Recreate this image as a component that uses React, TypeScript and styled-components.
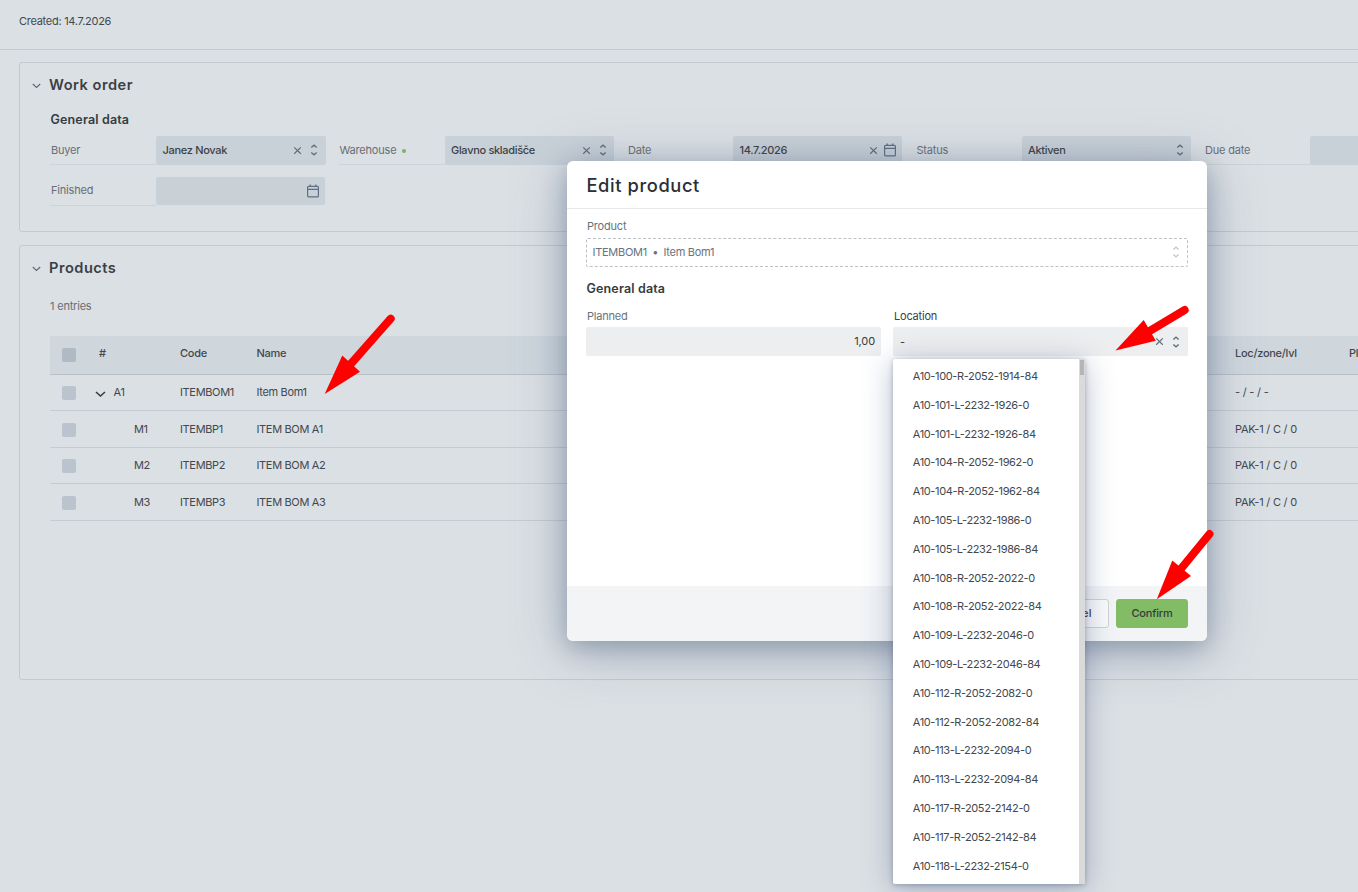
import React from "react";
import styled, { createGlobalStyle } from "styled-components";

const GlobalStyle = createGlobalStyle`
  * { box-sizing: border-box; }
  html, body { margin: 0; padding: 0; }
  body {
    width: 1358px;
    height: 892px;
    overflow: hidden;
    background: #dbe0e4;
    font-family: Inter, "Liberation Sans", sans-serif;
    font-size: 11px;
    letter-spacing: -0.27px;
    color: #43484d;
  }
`;

const Page = styled.div`
  position: relative;
  width: 1358px;
  height: 892px;
  overflow: hidden;
`;

const TopBar = styled.header`
  height: 50px;
  padding: 14px 19px 0;
  line-height: 14px;
  border-bottom: 1px solid #c3c9ce;
`;

const Sections = styled.main`
  display: flex;
  flex-direction: column;
  gap: 13px;
  padding: 12px 0 0 19px;
  width: 1600px;
`;

const Panel = styled.section<{ $height: number }>`
  height: ${(p) => p.$height}px;
  border: 1px solid #c3c9ce;
  border-radius: 3px;
  padding: 12px 0 0 30px;
`;

const PanelTitle = styled.h2`
  display: flex;
  align-items: center;
  gap: 7px;
  height: 20px;
  margin: 0 0 0 -19px;
  font-size: 14.6px;
  font-weight: 600;
  letter-spacing: 0.5px;
  color: #3a3f44;
  svg { margin: 2px 0 0; }
`;

const SubTitle = styled.h3<{ $top: number; $bottom: number }>`
  margin: ${(p) => p.$top}px 0 ${(p) => p.$bottom}px;
  padding-left: 0.5px;
  height: 16px;
  line-height: 16px;
  font-size: 12.5px;
  font-weight: 600;
  letter-spacing: 0.15px;
  color: #363b40;
`;

const Fields = styled.div`
  display: grid;
  grid-template-columns: repeat(5, 275.5px);
  column-gap: 13px;
  row-gap: 12px;
`;

const Field = styled.div`
  display: flex;
  height: 29px;
`;

const FieldLabel = styled.label<{ $raised?: boolean }>`
  display: flex;
  align-items: center;
  gap: 6px;
  width: 106px;
  padding: 0 0 ${(p) => (p.$raised ? 2 : 0)}px 1px;
  border-bottom: 1px solid #cdd3d8;
  letter-spacing: -0.2px;
  color: #686e74;
`;

const RequiredDot = styled.span`
  width: 4px;
  height: 4px;
  margin-top: 1px;
  border-radius: 50%;
  background: #7fb069;
`;

const FieldInput = styled.div<{ $date?: boolean }>`
  display: flex;
  align-items: center;
  flex: 1;
  gap: 6px;
  height: ${(p) => (p.$date ? 28 : 28.5)}px;
  margin-right: ${(p) => (p.$date ? 1 : 0)}px;
  padding: 0 5.5px 0 6.5px;
  border-radius: 2px;
  background: #c9d1d8;
  color: #3c4146;
  font-weight: 500;
  letter-spacing: -0.31px;
`;

const Value = styled.span`
  flex: 1;
`;

const Entries = styled.div`
  margin: 21px 0 23px;
  height: 14px;
  line-height: 14px;
  letter-spacing: -0.2px;
  color: #686e74;
`;

const Row = styled.div<{ $head?: boolean }>`
  display: grid;
  grid-template-columns: 49px 81px 76.5px 978.5px 114px 1fr;
  align-items: center;
  height: ${(p) => (p.$head ? "38.5px" : "36.6px")};
  border-bottom: 1px solid ${(p) => (p.$head ? "#b9c0c6" : "#c5cbd1")};
  background: ${(p) => (p.$head ? "#cfd7dd" : "transparent")};
  font-weight: ${(p) => (p.$head ? 500 : 400)};
  letter-spacing: ${(p) => (p.$head ? -0.27 : -0.34)}px;
  padding-bottom: ${(p) => (p.$head ? 3.5 : 0.3)}px;
`;

const LocationCell = styled.span`
  letter-spacing: -0.22px;
`;

const CheckBox = styled.span<{ $head?: boolean }>`
  width: 14px;
  height: 14px;
  margin: ${(p) => (p.$head ? 3.5 : 1.6)}px 0 0 12px;
  border-radius: 2px;
  background: ${(p) => (p.$head ? "#b0bac5" : "#bac3ce")};
`;

const TreeCell = styled.span<{ $indent: number }>`
  display: flex;
  align-items: center;
  gap: 7.5px;
  padding-left: ${(p) => p.$indent}px;
  svg { margin: 4px 0 0 -4px; }
`;

const Modal = styled.div`
  position: absolute;
  left: 567px;
  top: 161px;
  width: 640px;
  height: 480px;
  display: flex;
  flex-direction: column;
  border-radius: 6px;
  background: #fff;
  box-shadow: 0 9px 55px rgba(75, 95, 135, 0.36), 0 6px 24px rgba(60, 80, 100, 0.34);
`;

const ModalHeader = styled.div`
  height: 48px;
  padding: 11px 20px 0 19.5px;
  border-bottom: 1px solid #e6e8ea;
  font-size: 18.3px;
  line-height: 26px;
  font-weight: 500;
  letter-spacing: 0.6px;
  color: #2a2f34;
`;

const ModalBody = styled.div`
  flex: 1;
  padding: 10px 19px 0;
`;

const ModalLabel = styled.div<{ $strong?: boolean }>`
  height: 14px;
  line-height: 14px;
  padding-left: 1px;
  margin-bottom: 5px;
  letter-spacing: -0.2px;
  color: ${(p) => (p.$strong ? "#3c4146" : "#6a727b")};
`;

const ReadOnly = styled.div`
  display: flex;
  align-items: center;
  height: 29px;
  padding: 0 5px 1px 5.5px;
  border: 1px dashed #bcc1c5;
  border-radius: 2px;
  color: #6a727b;
`;

const Separator = styled.span`
  width: 16.5px;
  text-align: center;
`;

const Columns = styled.div`
  display: grid;
  grid-template-columns: 295px 295px;
  gap: 12px;
`;

const ModalInput = styled.div<{ $right?: boolean }>`
  display: flex;
  align-items: center;
  justify-content: ${(p) => (p.$right ? "flex-end" : "flex-start")};
  gap: 6px;
  height: 29px;
  margin-top: -1px;
  padding: 0 6px ${(p) => (p.$right ? 1 : 0)}px 7px;
  border-radius: 2px;
  background: #edeeef;
  color: #363b40;
  letter-spacing: -0.1px;
`;

const ModalFooter = styled.div`
  display: flex;
  justify-content: flex-end;
  gap: 7px;
  height: 55px;
  padding: 13px 19px;
  border-radius: 0 0 6px 6px;
  background: #f2f4f6;
`;

const Button = styled.button<{ $primary?: boolean }>`
  width: 72px;
  height: 29px;
  padding: 0 0 1px;
  border: 1px solid ${(p) => (p.$primary ? "#82bc64" : "#cfd2d5")};
  border-radius: 3px;
  background: ${(p) => (p.$primary ? "#82bc64" : "#f9fafb")};
  color: #363b40;
  font: 500 11px Inter, sans-serif;
  letter-spacing: ${(p) => (p.$primary ? -0.18 : 0.1)}px;
`;

const Dropdown = styled.div`
  position: absolute;
  left: 893px;
  top: 359px;
  width: 192px;
  height: 525px;
  display: flex;
  border-radius: 2px;
  background: #fff;
  box-shadow: 0 4px 30px rgba(70, 90, 135, 0.4), 0 1px 5px rgba(50, 60, 80, 0.35);
`;

const Options = styled.ul`
  flex: 1;
  margin: 0;
  padding: 3px 0 0 19.8px;
  list-style: none;
  letter-spacing: -0.36px;
`;

const Option = styled.li`
  height: 28.8px;
  line-height: 28.8px;
  white-space: nowrap;
`;

const ScrollTrack = styled.div`
  width: 6px;
  padding: 1px 1px 0;
  background: #dadada;
`;

const ScrollThumb = styled.div`
  height: 15px;
  background: #b5b5b5;
`;

const Annotations = styled.svg`
  position: absolute;
  left: 0;
  top: 0;
  pointer-events: none;
`;

const Chevron = ({ bold = false }: { bold?: boolean }) => (
  <svg width="11" height="8" viewBox="0 0 11 8" fill="none" stroke={bold ? "#33383d" : "#5f666d"} strokeWidth={bold ? 1.5 : 1.1}>
    <path d={bold ? "M1 2 L5.5 6 L10 2" : "M1.8 2 L5.5 5.5 L9.2 2"} />
  </svg>
);

const UpDown = ({ color = "#606d79" }: { color?: string }) => (
  <svg width="12" height="12" viewBox="0 0 12 12" fill="none" stroke={color} strokeWidth="1.3">
    <path d="M3.3 3.6 L6 1.2 L8.7 3.6 M3.3 8.4 L6 10.8 L8.7 8.4" />
  </svg>
);

const Cross = () => (
  <svg width="9" height="9" viewBox="0 0 9 9" fill="none" stroke="#606d79" strokeWidth="1.2">
    <path d="M1.2 1.4 L7.8 7.8 M7.8 1.4 L1.2 7.8" />
  </svg>
);

const Calendar = () => (
  <svg width="12" height="14" viewBox="0 0 12 14" fill="none" stroke="#5d6f82" strokeWidth="1.2">
    <rect x="0.6" y="2.3" width="10.8" height="10.6" rx="1" />
    <path d="M0.6 5.4 H11.4 M3.2 0.6 V2.4 M8.8 0.6 V2.4" />
  </svg>
);

const rows = [
  { id: "A1", code: "ITEMBOM1", name: "Item Bom1", loc: "- / - / -", parent: true },
  { id: "M1", code: "ITEMBP1", name: "ITEM BOM A1", loc: "PAK-1 / C / 0" },
  { id: "M2", code: "ITEMBP2", name: "ITEM BOM A2", loc: "PAK-1 / C / 0" },
  { id: "M3", code: "ITEMBP3", name: "ITEM BOM A3", loc: "PAK-1 / C / 0" },
];

const locations = [
  "A10-100-R-2052-1914-84",
  "A10-101-L-2232-1926-0",
  "A10-101-L-2232-1926-84",
  "A10-104-R-2052-1962-0",
  "A10-104-R-2052-1962-84",
  "A10-105-L-2232-1986-0",
  "A10-105-L-2232-1986-84",
  "A10-108-R-2052-2022-0",
  "A10-108-R-2052-2022-84",
  "A10-109-L-2232-2046-0",
  "A10-109-L-2232-2046-84",
  "A10-112-R-2052-2082-0",
  "A10-112-R-2052-2082-84",
  "A10-113-L-2232-2094-0",
  "A10-113-L-2232-2094-84",
  "A10-117-R-2052-2142-0",
  "A10-117-R-2052-2142-84",
  "A10-118-L-2232-2154-0",
];

export default function App() {
  return (
    <Page>
      <GlobalStyle />
      <TopBar>Created: 14.7.2026</TopBar>
      <Sections>
        <Panel $height={170}>
          <PanelTitle><Chevron />Work order</PanelTitle>
          <SubTitle $top={17} $bottom={8}>General data</SubTitle>
          <Fields>
            <Field>
              <FieldLabel>Buyer</FieldLabel>
              <FieldInput><Value>Janez Novak</Value><Cross /><UpDown /></FieldInput>
            </Field>
            <Field>
              <FieldLabel>Warehouse<RequiredDot /></FieldLabel>
              <FieldInput><Value>Glavno skladišče</Value><Cross /><UpDown /></FieldInput>
            </Field>
            <Field>
              <FieldLabel>Date</FieldLabel>
              <FieldInput $date><Value>14.7.2026</Value><Cross /><Calendar /></FieldInput>
            </Field>
            <Field>
              <FieldLabel>Status</FieldLabel>
              <FieldInput><Value>Aktiven</Value><UpDown /></FieldInput>
            </Field>
            <Field>
              <FieldLabel>Due date</FieldLabel>
              <FieldInput />
            </Field>
            <Field>
              <FieldLabel $raised>Finished</FieldLabel>
              <FieldInput $date><Value /><Calendar /></FieldInput>
            </Field>
          </Fields>
        </Panel>
        <Panel $height={435}>
          <PanelTitle><Chevron />Products</PanelTitle>
          <Entries>1 entries</Entries>
          <Row $head>
            <CheckBox $head />
            <span>#</span>
            <span>Code</span>
            <span>Name</span>
            <span>Loc/zone/lvl</span>
            <span>Planned</span>
          </Row>
          {rows.map((row) => (
            <Row key={row.id}>
              <CheckBox />
              <TreeCell $indent={row.parent ? 0 : 35}>
                {row.parent && <Chevron bold />}
                {row.id}
              </TreeCell>
              <span>{row.code}</span>
              <span>{row.name}</span>
              <LocationCell>{row.loc}</LocationCell>
            </Row>
          ))}
        </Panel>
      </Sections>

      <Modal>
        <ModalHeader>Edit product</ModalHeader>
        <ModalBody>
          <ModalLabel>Product</ModalLabel>
          <ReadOnly>
            ITEMBOM1<Separator>•</Separator><Value>Item Bom1</Value><UpDown color="#c6cacd" />
          </ReadOnly>
          <SubTitle $top={14} $bottom={12}>General data</SubTitle>
          <Columns>
            <div>
              <ModalLabel>Planned</ModalLabel>
              <ModalInput $right>1,00</ModalInput>
            </div>
            <div>
              <ModalLabel $strong>Location</ModalLabel>
              <ModalInput><Value>-</Value><Cross /><UpDown /></ModalInput>
            </div>
          </Columns>
        </ModalBody>
        <ModalFooter>
          <Button>Cancel</Button>
          <Button $primary>Confirm</Button>
        </ModalFooter>
      </Modal>

      <Dropdown>
        <Options>
          {locations.map((location) => <Option key={location}>{location}</Option>)}
        </Options>
        <ScrollTrack><ScrollThumb /></ScrollTrack>
      </Dropdown>

      <Annotations width="1358" height="892" fill="#fe0000" stroke="#fe0000">
        <path d="M390.7 318.7 L349 366" strokeWidth="8" strokeLinecap="round" />
        <path d="M324.7 394 L342.3 355.5 L360 371.7 Z" stroke="none" />
        <path d="M1184.7 310 L1148 332" strokeWidth="8" strokeLinecap="round" />
        <path d="M1115.5 350.5 L1143.7 320 L1155.8 340.7 Z" stroke="none" />
        <path d="M1209.5 534 L1180 570" strokeWidth="8" strokeLinecap="round" />
        <path d="M1156.8 599.3 L1172.3 560.5 L1191 576 Z" stroke="none" />
      </Annotations>
    </Page>
  );
}
